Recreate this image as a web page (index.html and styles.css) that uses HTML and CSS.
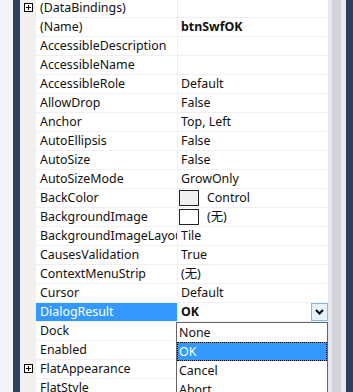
FILE: index.html
```html
<!DOCTYPE html>
<html>
<head>
<meta charset="utf-8">
<link rel="stylesheet" href="styles.css">
</head>
<body>
<div class="frame">
  <div class="edge"></div>
  <div class="navy"></div>
  <div class="grid">
    <div class="row"><div class="gutter"><svg class="plus" width="9" height="9" viewBox="0 0 9 9"><rect x="0.5" y="0.5" width="8" height="8" fill="#fff" stroke="#000"/><path d="M2 4.5h5M4.5 2v5" stroke="#000"/></svg></div><div class="name">(DataBindings)</div><div class="val"></div></div>
    <div class="row"><div class="gutter"></div><div class="name">(Name)</div><div class="val bold">btnSwfOK</div></div>
    <div class="row"><div class="gutter"></div><div class="name">AccessibleDescription</div><div class="val"></div></div>
    <div class="row"><div class="gutter"></div><div class="name">AccessibleName</div><div class="val"></div></div>
    <div class="row"><div class="gutter"></div><div class="name">AccessibleRole</div><div class="val">Default</div></div>
    <div class="row"><div class="gutter"></div><div class="name">AllowDrop</div><div class="val">False</div></div>
    <div class="row"><div class="gutter"></div><div class="name">Anchor</div><div class="val">Top, Left</div></div>
    <div class="row"><div class="gutter"></div><div class="name">AutoEllipsis</div><div class="val">False</div></div>
    <div class="row"><div class="gutter"></div><div class="name">AutoSize</div><div class="val">False</div></div>
    <div class="row"><div class="gutter"></div><div class="name">AutoSizeMode</div><div class="val">GrowOnly</div></div>
    <div class="row"><div class="gutter"></div><div class="name">BackColor</div><div class="val"><span class="swatch gray"></span><span class="swlabel">Control</span></div></div>
    <div class="row"><div class="gutter"></div><div class="name">BackgroundImage</div><div class="val"><span class="swatch"></span><span class="swlabel">(无)</span></div></div>
    <div class="row"><div class="gutter"></div><div class="name">BackgroundImageLayout</div><div class="val">Tile</div></div>
    <div class="row"><div class="gutter"></div><div class="name">CausesValidation</div><div class="val">True</div></div>
    <div class="row"><div class="gutter"></div><div class="name">ContextMenuStrip</div><div class="val">(无)</div></div>
    <div class="row"><div class="gutter"></div><div class="name">Cursor</div><div class="val">Default</div></div>
    <div class="row"><div class="gutter"></div><div class="name selected">DialogResult</div><div class="val bold edit"><span>OK</span><span class="dropbtn"><svg width="9" height="6" viewBox="0 0 9 6"><path d="M1 1l3.5 3.5L8 1" fill="none" stroke="#000" stroke-width="2"/></svg></span></div></div>
    <div class="row"><div class="gutter"></div><div class="name">Dock</div><div class="val"></div></div>
    <div class="row"><div class="gutter"></div><div class="name">Enabled</div><div class="val"></div></div>
    <div class="row"><div class="gutter"><svg class="plus" width="9" height="9" viewBox="0 0 9 9"><rect x="0.5" y="0.5" width="8" height="8" fill="#fff" stroke="#000"/><path d="M2 4.5h5M4.5 2v5" stroke="#000"/></svg></div><div class="name">FlatAppearance</div><div class="val"></div></div>
    <div class="row"><div class="gutter"></div><div class="name">FlatStyle</div><div class="val"></div></div>
  </div>
  <div class="scroll"><div class="s1"></div><div class="s2"></div><div class="s3"></div></div>
  <div class="navy"></div>
  <ul class="list">
    <li>None</li>
    <li class="hl">OK</li>
    <li>Cancel</li>
    <li>Abort</li>
  </ul>
</div>
</body>
</html>
```
FILE: styles.css
```css
html, body {
  margin: 0;
  padding: 0;
  background: #fff;
  overflow: hidden;
}
body {
  width: 353px;
  height: 392px;
  font-family: "Noto Sans", "Noto Sans CJK SC", sans-serif;
  font-size: 12.4px;
  color: #111;
}
.frame {
  position: relative;
  display: flex;
  width: 353px;
  height: 392px;
  overflow: hidden;
}
.edge {
  width: 13px;
  flex: none;
  background: #f4f4f6;
}
.navy {
  width: 7px;
  flex: none;
  background: #2e3f5f;
}
.grid {
  width: 308px;
  flex: none;
  margin-top: -1px;
  background: #f0f0f0;
}
.row {
  display: flex;
  height: 19px;
}
.gutter {
  width: 16px;
  flex: none;
  background: #f0f0f0;
  position: relative;
}
.plus {
  display: block;
  margin: 4px 0 0 4px;
}
.name {
  width: 137px;
  flex: none;
  height: 18px;
  line-height: 18px;
  padding-left: 4px;
  background: #fff;
  border-bottom: 1px solid #f0f0f0;
  border-right: 1px solid #f0f0f0;
  white-space: nowrap;
  overflow: hidden;
}
.name.selected {
  background: #3399ff;
  color: #fff;
}
.val {
  width: 147px;
  flex: none;
  height: 18px;
  line-height: 18px;
  padding-left: 3px;
  background: #fff;
  border-bottom: 1px solid #f0f0f0;
  white-space: nowrap;
  display: flex;
  align-items: center;
}
.bold {
  font-weight: bold;
}
.edit {
  justify-content: space-between;
}
.dropbtn {
  width: 15px;
  height: 16px;
  border: 1px solid #86b7ea;
  background: #e5f1fb;
  display: flex;
  align-items: center;
  justify-content: center;
}
.dropbtn svg {
  display: block;
}
.swatch {
  width: 18px;
  height: 14px;
  border: 1px solid #222;
  background: #fff;
  flex: none;
  margin-left: -2px;
}
.swatch.gray {
  background: #f0f0f0;
}
.swlabel {
  margin-left: 8px;
}
.scroll {
  width: 18px;
  flex: none;
  display: flex;
}
.s1 {
  width: 4px;
  background: #e8e8ec;
}
.s2 {
  width: 9px;
  background: #d1d1d7;
}
.s3 {
  width: 5px;
  background: #e9e9ee;
}
.list {
  position: absolute;
  left: 176px;
  top: 322px;
  width: 150px;
  height: 80px;
  margin: 0;
  padding: 0;
  list-style: none;
  background: #fff;
  border: 1px solid #646464;
}
.list li {
  height: 19px;
  line-height: 19px;
  padding-left: 2px;
  box-sizing: border-box;
}
.list li.hl {
  background: #3399ff;
  color: #fff;
  border: 1px dotted #000;
  line-height: 17px;
  padding-left: 1px;
}
```
